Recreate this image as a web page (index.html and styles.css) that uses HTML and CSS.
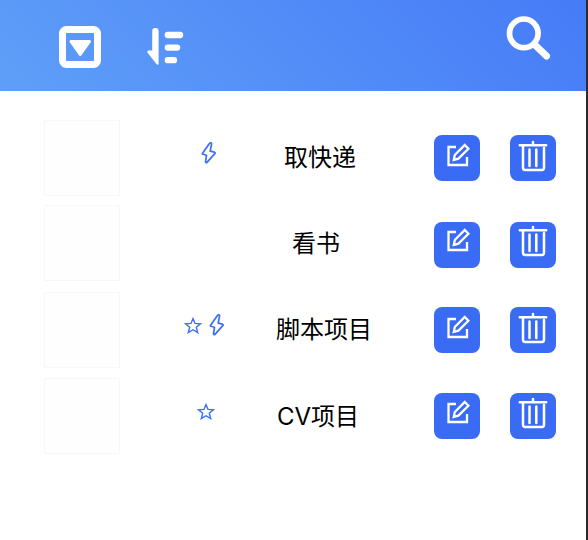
FILE: index.html
```
<!DOCTYPE html>
<html lang="zh-CN">
<head>
<meta charset="utf-8">
<title>待办</title>
<link rel="stylesheet" href="styles.css">
</head>
<body>
<svg class="defs" aria-hidden="true">
  <symbol id="bolt" viewBox="0 0 16 22"><path d="M8.6 1.2 1.6 11.2Q1 12 2 12.3L5.5 13.3 4.5 19.8Q4.6 21.2 6 20.4L14 11.4Q14.4 10.6 13.4 10.2L9.2 9.2 10.6 1.9Q10.3.2 8.6 1.2Z"/></symbol>
  <symbol id="star" viewBox="0 0 18 17"><path d="M9 1.6 11 6.4 16.5 6.8 12.3 10.2 13.7 15.6 9 12.7 4.3 15.6 5.7 10.2 1.5 6.8 7 6.4Z"/></symbol>
  <symbol id="edit" viewBox="0 0 24 24"><path d="M10 4H2.5V22H21V14"/><path d="M18.8 2 22.4 5.7 12.4 15.6 7.8 16.8 8.8 12Z"/></symbol>
  <symbol id="trash" viewBox="0 0 30 32"><path d="M1.8 5.3H28.2M15 2V5M5 6V27.5Q5 30 7.2 30H24Q26 30 26 27.5V8M11.5 9.5V26M18.3 9.5V26"/></symbol>
</svg>
<div class="page">
  <header class="bar">
    <svg class="filter" viewBox="0 0 42 42"><rect x="3.5" y="3.5" width="35" height="35" rx="4"/><path d="M12 15.5H30.5L21.2 28.5Z"/></svg>
    <svg class="sort" viewBox="0 0 38 38"><path class="arrow" d="M5.2 3.2A3.2 3.2 0 0 1 11.6 3.2V35.5Q11.4 37.8 9.6 36.2L.4 24.5Q0 22.5 1.4 22.5H5.2Z"/><path class="lines" d="M20.8 7H33.1M20.8 19.6H30.1M20.8 32.2H27"/></svg>
    <svg class="search" viewBox="0 0 46 46"><circle cx="17.8" cy="18.3" r="14.3"/><path d="M28.5 29.5 40.5 41"/></svg>
  </header>
  <main class="list">
    <div class="row r1"><span class="box"></span><span class="tags"><svg class="bolt"><use href="#bolt"/></svg></span><span class="name">取快递</span><button class="btn"><svg class="edit"><use href="#edit"/></svg></button><button class="btn"><svg class="trash"><use href="#trash"/></svg></button></div>
    <div class="row r2"><span class="box"></span><span class="tags"></span><span class="name">看书</span><button class="btn"><svg class="edit"><use href="#edit"/></svg></button><button class="btn"><svg class="trash"><use href="#trash"/></svg></button></div>
    <div class="row r3"><span class="box"></span><span class="tags"><svg class="star"><use href="#star"/></svg><svg class="bolt"><use href="#bolt"/></svg></span><span class="name">脚本项目</span><button class="btn"><svg class="edit"><use href="#edit"/></svg></button><button class="btn"><svg class="trash"><use href="#trash"/></svg></button></div>
    <div class="row r4"><span class="box"></span><span class="tags"><svg class="star"><use href="#star"/></svg></span><span class="name">CV项目</span><button class="btn"><svg class="edit"><use href="#edit"/></svg></button><button class="btn"><svg class="trash"><use href="#trash"/></svg></button></div>
  </main>
</div>
</body>
</html>
```
FILE: styles.css
```
* { box-sizing: border-box; }
body { margin: 0; background: #fff; font-family: Inter, "Noto Sans CJK SC", sans-serif; color: #000; }
.defs { display: none; }
.page { height: 540px; border-right: 2px solid #2b2b2a; overflow: hidden; }
svg { display: block; flex: none; fill: none; stroke-linecap: round; stroke-linejoin: round; }

.bar { height: 91px; display: flex; align-items: flex-start; padding: 0 34px 0 59px; background: linear-gradient(45deg, #5f9ff8, #467bf7); stroke: #fff; }
.filter { width: 42px; height: 42px; margin-top: 26px; stroke-width: 7; }
.filter path { fill: #fff; stroke-width: 3; }
.sort { width: 38px; height: 38px; margin: 28px 0 0 46px; }
.arrow { fill: #fff; stroke: none; }
.lines { stroke-width: 6.3; }
.search { width: 46px; height: 46px; margin: 15px 0 0 auto; stroke-width: 5.7; }
.search path { stroke-width: 7; }

.list { padding-top: 29px; }
.row { display: grid; grid-template-columns: 76px 156px 158px 46px 46px; align-items: start; padding-left: 44px; height: 86px; }
.row .btn:last-child { margin-left: 30px; }
.r1 { height: 85px; --bolt-x: 81px; --text-x: 8px; --btn-y: 15px; --icon-y: 8px; --tag-y: 22px; --text-y: 21px; }
.r2 { height: 87px; --text-x: 16px; --btn-y: 16.5px; --icon-y: 6.5px; --text-y: 22px; }
.r3 { --bolt-x: 64px; --text-x: 0px; --btn-y: 14.5px; --icon-y: 8.5px; --tag-y: 22px; --text-y: 21px; }
.r4 { --bolt-x: 77px; --text-x: 1px; --btn-y: 15px; --icon-y: 7px; --tag-y: 22px; --text-y: 22px; }
.box { width: 76px; height: 76px; border: 1.5px solid #f7f7f7; background: #fefefe; }
.tags { display: flex; gap: 7px; padding: var(--tag-y) 0 0 var(--bolt-x); stroke: #3b70f2; stroke-width: 1.7; }
.bolt { width: 16px; height: 22px; }
.star { width: 18px; height: 17px; margin-top: 3px; stroke-width: 1.4; stroke-linejoin: miter; }
.name { padding: var(--text-y) 0 0 var(--text-x); font-size: 24px; line-height: 34px; white-space: nowrap; }
.btn { width: 46px; height: 46px; margin: var(--btn-y) 0 0; padding: var(--icon-y) 0 0; display: flex; justify-content: center; align-items: flex-start; border: 0; border-radius: 8px; background: #3a6bf5; stroke: #fff; }
.edit { width: 24px; height: 24px; stroke-width: 2.3; stroke-linejoin: miter; stroke-linecap: butt; margin-left: 1px; }
.trash { width: 30px; height: 32px; margin-top: -2.7px; stroke-width: 2.5; }
```
